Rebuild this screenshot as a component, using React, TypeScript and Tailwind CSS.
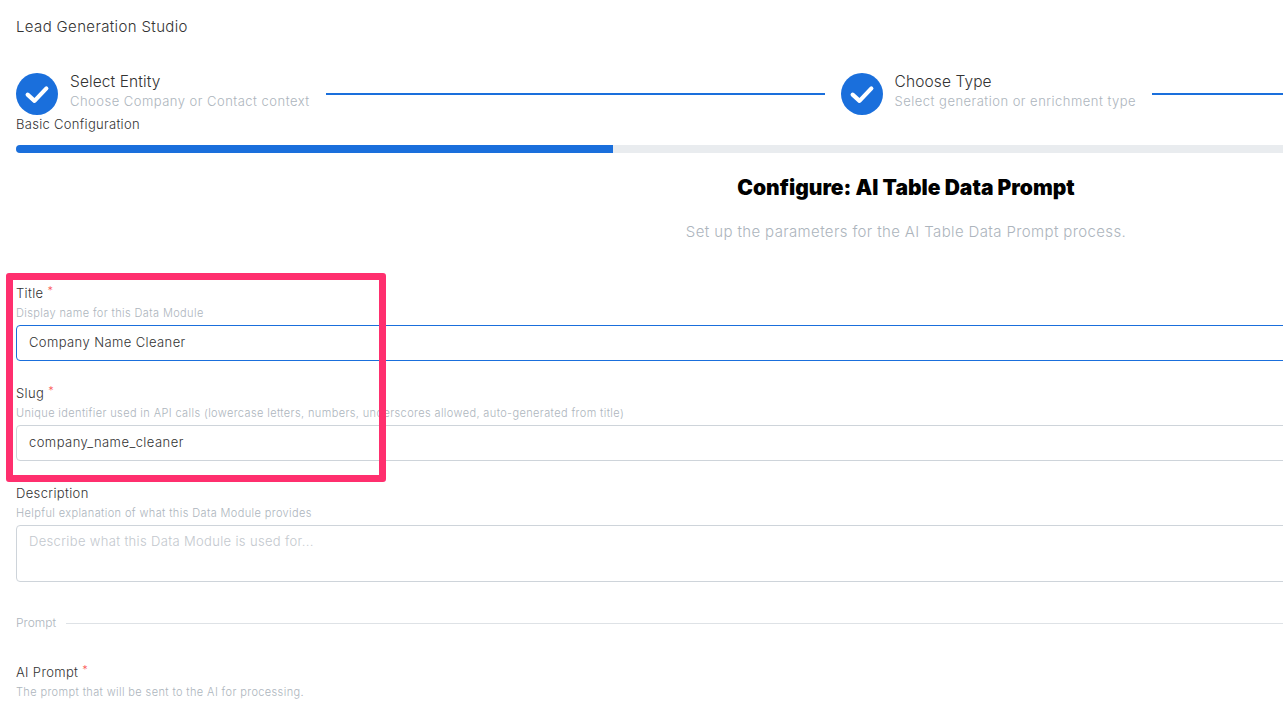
const Check = () => (
  <svg viewBox="0 0 24 24" className="h-[30px] w-[30px]" fill="none" stroke="white" strokeWidth="3.3" strokeLinecap="round" strokeLinejoin="round">
    <path d="M4.5 12.5l5.5 5L19.5 7.5" />
  </svg>
);

const Step = ({ title, sub }: { title: string; sub: string }) => (
  <div className="flex items-center gap-3 shrink-0">
    <div className="flex h-[42px] w-[42px] items-center justify-center rounded-full bg-[#1a6fdc]">
      <Check />
    </div>
    <div className="-mt-[7px]">
      <div className="text-[15.5px] leading-[20px] tracking-[0.1px] text-[#333]">{title}</div>
      <div className="text-[13px] leading-[18px] tracking-[0.48px] text-[#adb5bd]">{sub}</div>
    </div>
  </div>
);

const Field = ({ label, hint, required, children }: { label: string; hint: string; required?: boolean; children: React.ReactNode }) => (
  <div>
    <div className="text-[13px] leading-[20px] tracking-[0.35px] text-[#333]">
      {label}
      {required && <span className="ml-1 align-top text-[11px] leading-[16px] text-[#fa5252]">*</span>}
    </div>
    <div className="mt-[3px] mb-[5px] text-[11px] leading-[14px] tracking-[0.38px] text-[#adb5bd]">{hint}</div>
    {children}
  </div>
);

export default function App() {
  return (
    <div className="relative h-[706px] w-[1283px] overflow-hidden bg-white font-['Inter',sans-serif] font-light">
      <div className="w-[1812px] px-4 pt-[17px]">
        <div className="text-[15px] leading-[20px] tracking-[0.36px] text-[#333]">Lead Generation Studio</div>

        {/* Stepper */}
        <div className="mt-[36px] flex items-center gap-4">
          <Step title="Select Entity" sub="Choose Company or Contact context" />
          <div className="h-[2px] w-[499px] bg-[#1a6fdc]" />
          <Step title="Choose Type" sub="Select generation or enrichment type" />
          <div className="h-[2px] flex-1 bg-[#1a6fdc]" />
        </div>

        <div className="text-[13px] leading-[18px] tracking-[0.3px] text-[#333]">Basic Configuration</div>
        <div className="mt-[12px] h-2 overflow-hidden rounded-full bg-[#e9ecef]">
          <div className="h-full w-[597px] bg-[#1a6fdc]" />
        </div>

        <div className="mt-[21px] text-center">
          <h2 className="text-[21px] font-black leading-[28px] text-black">Configure: AI Table Data Prompt</h2>
          <p className="mt-[18px] text-[15px] leading-[24px] tracking-[0.37px] text-[#adb5bd]">Set up the parameters for the AI Table Data Prompt process.</p>
        </div>

        <div className="mt-[39px] flex flex-col gap-[22px]">
          <Field label="Title" hint="Display name for this Data Module" required>
            <div className="flex h-9 items-center rounded border border-[#1a6fdc] px-3 text-[13px] tracking-[0.4px] text-[#333]">Company Name Cleaner</div>
          </Field>
          <Field label="Slug" hint="Unique identifier used in API calls (lowercase letters, numbers, underscores allowed, auto-generated from title)" required>
            <div className="flex h-9 items-center rounded border border-[#ced4da] px-3 text-[13px] tracking-[0.45px] text-[#333]">company_name_cleaner</div>
          </Field>
          <Field label="Description" hint="Helpful explanation of what this Data Module provides">
            <div className="h-[57px] rounded border border-[#ced4da] px-3 pt-[6px] text-[13px] tracking-[0.34px] text-[#c3c8ce]">Describe what this Data Module is used for...</div>
          </Field>
        </div>

        <div className="mt-[32px] flex items-center gap-[10px] text-[12px] leading-[18px] text-[#adb5bd]">
          Prompt
          <div className="h-px flex-1 bg-[#dee2e6]" />
        </div>

        <div className="mt-[30px]">
          <Field label="AI Prompt" hint="The prompt that will be sent to the AI for processing." required>
            <div className="h-9" />
          </Field>
        </div>
      </div>

      {/* Annotation drawn over the screenshot */}
      <div className="absolute left-[6px] top-[273px] h-[209px] w-[380px] rounded-[3px] border-[7px] border-[#ff2f6e]" />
    </div>
  );
}
